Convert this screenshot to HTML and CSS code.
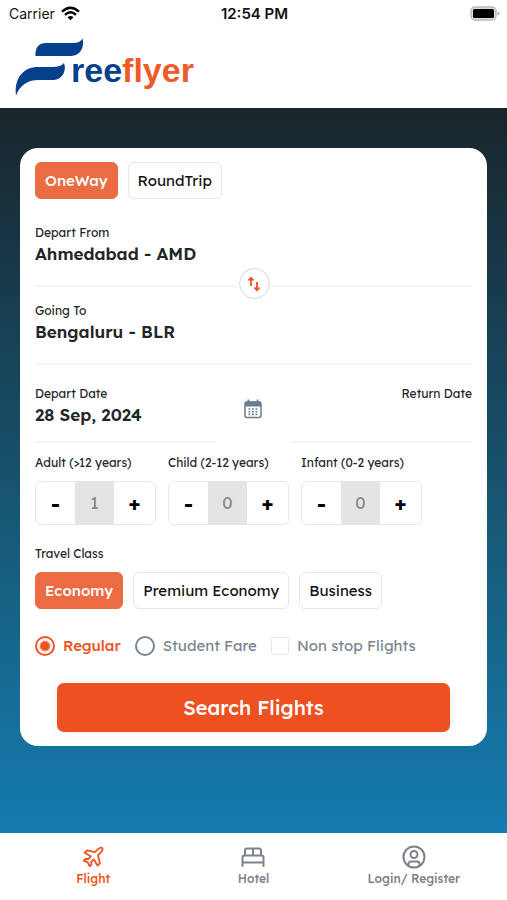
FILE: index.html
```html
<!DOCTYPE html>
<html lang="en">
<head>
<meta charset="utf-8">
<meta name="viewport" content="width=device-width, initial-scale=1">
<title>Freeflyer</title>
<link rel="stylesheet" href="styles.css">
</head>
<body>
<div class="status">
  <div class="carrier">Carrier
    <svg width="19" height="15" viewBox="0 0 19 15"><g fill="none" stroke="#000" stroke-width="2.4"><path d="M1 5.6Q9.500 -2.200 18 5.600"/><path d="M4 8.800Q9.500 3.800 15 8.800"/></g><path d="M6.500 11.200Q9.500 8.600 12.500 11.200L9.500 14.300Z"/></svg>
  </div>
  <div class="time">12:54 PM</div>
  <div class="battery"><svg width="31" height="15" viewBox="0 0 31 15"><rect x="2" y="1" width="25" height="13" rx="4" fill="#ddd" stroke="#bbb" stroke-width="1.500"/><rect x="4" y="3" width="21" height="9" rx="1.500"/><path d="M28.500 5.500q2 .5 2 2t-2 2z" fill="#aaa"/></svg></div>
</div>
<header class="brand">
  <svg width="70" height="60" viewBox="0 0 70 60" fill="#063f8c"><path d="M20.500 20C20 11 24 7 31 7H58Q65 7 67.500 2.500C70 11 65 20 56 20Z"/><path d="M1 59.500C-1 44 7 31 23 31H37Q46 31 49 27C52 35 47 44 38 44H24C11 44 5 50 1 59.500Z"/></svg>
  <div class="word">ree<span>flyer</span></div>
</header>
<main class="stage">
  <form class="card" onsubmit="return false">
    <div class="chips">
      <button type="button" class="chip active">OneWay</button>
      <button type="button" class="chip">RoundTrip</button>
    </div>
    <section class="place">
      <div class="label">Depart From</div>
      <div class="value">Ahmedabad - AMD</div>
      <button type="button" class="swap" aria-label="Swap"><svg width="14" height="16" viewBox="0 0 14 16" fill="none" stroke="#ee5322" stroke-width="1.800"><path d="M4 10V2M1.500 4.300L4 1.800L6.500 4.300M10 6V14M7.500 11.700L10 14.200L12.500 11.700"/></svg></button>
    </section>
    <section class="place">
      <div class="label">Going To</div>
      <div class="value">Bengaluru - BLR</div>
    </section>
    <section class="dates">
      <div class="date">
        <div class="label">Depart Date</div>
        <div class="value">28 Sep, 2024</div>
      </div>
      <svg class="cal" width="18" height="20" viewBox="0 0 18 20"><rect x="1" y="3" width="16" height="15.500" rx="2" fill="#fff" stroke="#6b7b90" stroke-width="1.500"/><path d="M1 7.500V4q0-1.500 1.500-1.500h13Q17 2.500 17 4v3.500zM3.500 .5h1.800v4H3.500zM12.700 .5h1.800v4h-1.800z" fill="#6b7b90"/><g fill="none" stroke="#6b7b90" stroke-width="1.600" stroke-dasharray="1.800 1.700"><path d="M4.500 10h9"/><path d="M4.500 12.700h9"/><path d="M4.500 15.400h9"/></g></svg>
      <div class="date return"><div class="label">Return Date</div></div>
    </section>
    <section class="people">
      <div><label class="label" for="adult">Adult (&gt;12 years)</label>
        <div class="stepper"><button type="button" aria-label="Fewer adults">-</button><input id="adult" value="1" readonly><button type="button" aria-label="More adults">+</button></div></div>
      <div><label class="label" for="child">Child (2-12 years)</label>
        <div class="stepper"><button type="button" aria-label="Fewer children">-</button><input id="child" value="0" readonly><button type="button" aria-label="More children">+</button></div></div>
      <div><label class="label" for="infant">Infant (0-2 years)</label>
        <div class="stepper"><button type="button" aria-label="Fewer infants">-</button><input id="infant" value="0" readonly><button type="button" aria-label="More infants">+</button></div></div>
    </section>
    <div class="label class-label">Travel Class</div>
    <div class="chips">
      <button type="button" class="chip active">Economy</button>
      <button type="button" class="chip">Premium Economy</button>
      <button type="button" class="chip">Business</button>
    </div>
    <div class="options">
      <label class="picked"><input type="radio" name="fare" checked>Regular</label>
      <label><input type="radio" name="fare">Student Fare</label>
      <label><input type="checkbox">Non stop Flights</label>
    </div>
    <button class="search">Search Flights</button>
  </form>
</main>
<nav class="tabs">
  <a href="#flight" class="on"><svg width="24" height="24" viewBox="-1 -1 26 26"><path d="M14 6.800L17.800 3.200Q20.500 1.200 22 2.200Q23 3.800 21 6.400L17.400 10.200L19.500 18.800L16.800 21.200L13 14.600L10 17.400L10.300 20.200L8.300 22L6.300 17.900L2 15.900L4 13.900L6.800 14.200L9.600 11.200L3 7.400L5.400 4.800Z"/></svg>Flight</a>
  <a href="#hotel"><svg width="24" height="24" viewBox="0 0 24 24"><path d="M1.500 21V12.500Q1.500 10.500 3.500 10.500H20.500Q22.500 10.500 22.500 12.500V21M1.500 17.500H22.500M4 10.500V5.500Q4 3.500 6 3.500H18Q20 3.500 20 5.500V10.500M12 3.500V10.500"/></svg>Hotel</a>
  <a href="#login"><svg width="24" height="24" viewBox="0 0 24 24"><circle cx="12" cy="12" r="10.500"/><circle cx="12" cy="9.500" r="3.500"/><path d="M6.500 20.500V19Q6.500 16.500 9 16.500H15Q17.500 16.500 17.500 19V20.500"/></svg>Login/ Register</a>
</nav>
</body>
</html>
```
FILE: styles.css
```css
* { box-sizing: border-box; }
body {
  margin: 0;
  min-height: 100vh;
  display: flex;
  flex-direction: column;
  background: #fff;
  color: #222628;
  font-family: Lexend, Inter, "Open Sans", sans-serif;
}
button, input { font: inherit; color: inherit; margin: 0; }
svg { flex: none; display: block; }

.status {
  display: grid;
  grid-template-columns: 1fr auto 1fr;
  align-items: center;
  height: 27px;
  padding: 0 7px 0 9px;
  font-family: Inter, sans-serif;
  font-size: 14px;
  color: #111;
}
.carrier { display: flex; align-items: center; gap: 6px; }
.time { font-size: 15px; font-weight: 600; }
.battery { justify-self: end; }

.brand {
  display: flex;
  align-items: flex-start;
  height: 81px;
  padding: 9px 15px;
}
.word {
  margin: 12px 0 0 -14px;
  font-family: "Liberation Sans", sans-serif;
  font-size: 34px;
  line-height: 44px;
  font-weight: 700;
  color: #063f8c;
}
.word span { color: #ee5a2a; }

.stage {
  flex: 1;
  padding: 40px 20px;
  background: linear-gradient(#19252a, #183747 20%, #174d66 45%, #16688d 75%, #157bb0);
}
.card {
  padding: 14px 15px;
  border-radius: 18px;
  background: #fff;
}
.chips { display: flex; gap: 10px; }
.chip {
  height: 37px;
  padding: 0 9px;
  border: 1px solid #e6e6e6;
  border-radius: 6px;
  background: #fff;
  color: #111;
  font-size: 15px;
  font-weight: 400;
}
.chip.active {
  border-color: #eb6b43;
  background: #eb6b43;
  color: #fff;
  font-weight: 500;
}
.label {
  display: block;
  font-size: 12px;
  line-height: 16px;
}
.value {
  font-size: 17px;
  line-height: 26px;
  font-weight: 600;
}
.place {
  position: relative;
  height: 78px;
  padding-top: 16px;
  border-bottom: 2px solid #f5f5f4;
}
.chips + .place { margin-top: 10px; }
.swap {
  position: absolute;
  bottom: -14px;
  left: 50%;
  display: grid;
  place-items: center;
  width: 31px;
  height: 31px;
  margin-left: -15px;
  padding: 0;
  border: 1px solid #d4d4d4;
  border-radius: 50%;
  background: #fff;
  outline: 2px solid #fff;
}
.dates {
  display: grid;
  grid-template-columns: 5fr 2fr 5fr;
  height: 78px;
}
.date {
  padding-top: 21px;
  border-bottom: 2px solid #f5f5f4;
}
.return { text-align: right; }
.cal { justify-self: center; margin-top: 34px; }

.people { display: flex; gap: 12px; margin-top: 12px; }
.stepper {
  display: grid;
  grid-template-columns: 39px 39px 1fr;
  width: 121px;
  height: 44px;
  margin-top: 10px;
  overflow: hidden;
  border: 1px solid #e6e6e6;
  border-radius: 6px;
}
.stepper button {
  padding: 0;
  border: 0;
  background: #fff;
  color: #000;
  font-size: 20px;
  font-weight: 700;
}
.stepper input {
  width: 100%;
  padding: 0 0 2px;
  border: 0;
  background: #e4e4e4;
  color: #84888d;
  font-size: 17px;
  text-align: center;
}
.class-label { margin: 21px 0 10px; }

.options {
  display: flex;
  align-items: center;
  gap: 14px;
  margin-top: 27px;
  font-size: 15px;
  line-height: 20px;
  font-weight: 400;
  color: #7c8590;
}
.options label { display: flex; align-items: center; gap: 8px; white-space: nowrap; }
.options .picked { color: #ee5322; font-weight: 500; }
.options input {
  appearance: none;
  flex: none;
  width: 20px;
  height: 20px;
  border: 2px solid #75869a;
  border-radius: 50%;
}
.options input:checked {
  border-color: #ee5322;
  background: radial-gradient(circle, #ee5322 4px, #fff 6px);
}
.options input[type="checkbox"] {
  width: 18px;
  height: 18px;
  border: 1px solid #e6e6e6;
  border-radius: 3px;
}
.search {
  display: block;
  width: calc(100% - 44px);
  height: 49px;
  margin: 27px auto 0;
  border: 0;
  border-radius: 7px;
  background: #ed5122;
  color: #fff;
  font-size: 20px;
  font-weight: 500;
  box-shadow: 0 1px 8px #0001;
}

.tabs {
  display: grid;
  grid-template-columns: repeat(3, 1fr);
  height: 67px;
  padding: 12px 13px 0;
}
.tabs a {
  display: flex;
  flex-direction: column;
  align-items: center;
  gap: 2px;
  color: #7c828a;
  font-size: 12px;
  line-height: 16px;
  font-weight: 500;
  text-decoration: none;
}
.tabs .on { color: #ee5322; }
.tabs svg {
  fill: none;
  stroke: currentColor;
  stroke-width: 2;
  stroke-linejoin: round;
  stroke-linecap: round;
}
```
